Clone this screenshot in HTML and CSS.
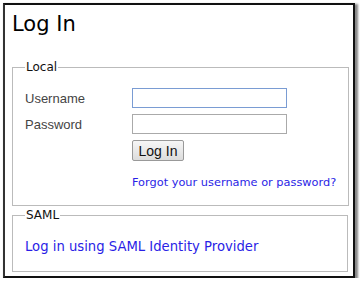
FILE: index.html
```html
<!DOCTYPE html>
<html lang="en">
<head>
    <meta charset="UTF-8">
    <title>Log In</title>
    <link rel="stylesheet" href="styles.css">
</head>
<body>
    <div class="window">
        <h1>Log In</h1>

        <!-- Local login -->
        <fieldset class="group local">
            <legend>Local</legend>
            <form class="login-form">
                <label for="username">Username</label>
                <input type="text" id="username" class="focused">
                <label for="password">Password</label>
                <input type="password" id="password">
                <span></span>
                <div><button type="button">Log In</button></div>
                <span></span>
                <a href="#" class="forgot">Forgot your username or password?</a>
            </form>
        </fieldset>

        <!-- SAML login -->
        <fieldset class="group saml">
            <legend>SAML</legend>
            <a href="#" class="saml-link">Log in using SAML Identity Provider</a>
        </fieldset>
    </div>
</body>
</html>
```

FILE: styles.css
```css
* {
    margin: 0;
    padding: 0;
    box-sizing: border-box;
}

body {
    background-color: #fff;
    font-family: "Liberation Sans", Arial, sans-serif;
}

a {
    color: #2a1ee6;
    text-decoration: none;
    font-family: "DejaVu Sans", Verdana, sans-serif;
    white-space: nowrap;
}

/* Window frame */
.window {
    margin: 3px 0 0 3px;
    width: 352px;
    height: 275px;
    border: 2px solid #111;
    border-left-color: #333;
    box-shadow: 2px 2px 2px 1px #888;
    padding: 6px 5px 0 7px;
}

h1 {
    font-family: "DejaVu Sans", Verdana, sans-serif;
    font-weight: normal;
    font-size: 21px;
    color: #000;
    height: 49px;
    line-height: 26px;
}

/* Fieldsets */
.group {
    border: 1px solid #bbb;
    padding: 0 12px;
}

.group legend {
    font-family: "DejaVu Sans", Verdana, sans-serif;
    font-size: 12px;
    color: #111;
    padding: 0 1px;
}

.local {
    height: 146px;
    padding-top: 14px;
}

.login-form {
    display: grid;
    grid-template-columns: 107px 1fr;
    row-gap: 6px;
    align-items: center;
}

.login-form label {
    font-size: 13px;
    color: #444;
}

.login-form input {
    width: 155px;
    height: 20px;
    border: 1px solid #aaa;
    font-size: 13px;
}

.login-form input.focused {
    border-color: #7a9cd3;
}

.login-form button {
    font-family: "Liberation Sans", Arial, sans-serif;
    font-size: 14px;
    color: #111;
    width: 52px;
    height: 21px;
    border: 1px solid #999;
    border-radius: 2px;
    background: linear-gradient(#f6f6f6, #dcdcdc);
}

.forgot {
    font-size: 11.35px;
    margin-top: 8px;
}

.saml {
    height: 64px;
    margin-top: 2px;
    padding-top: 15px;
}

.saml-link {
    font-size: 13.2px;
}
```
